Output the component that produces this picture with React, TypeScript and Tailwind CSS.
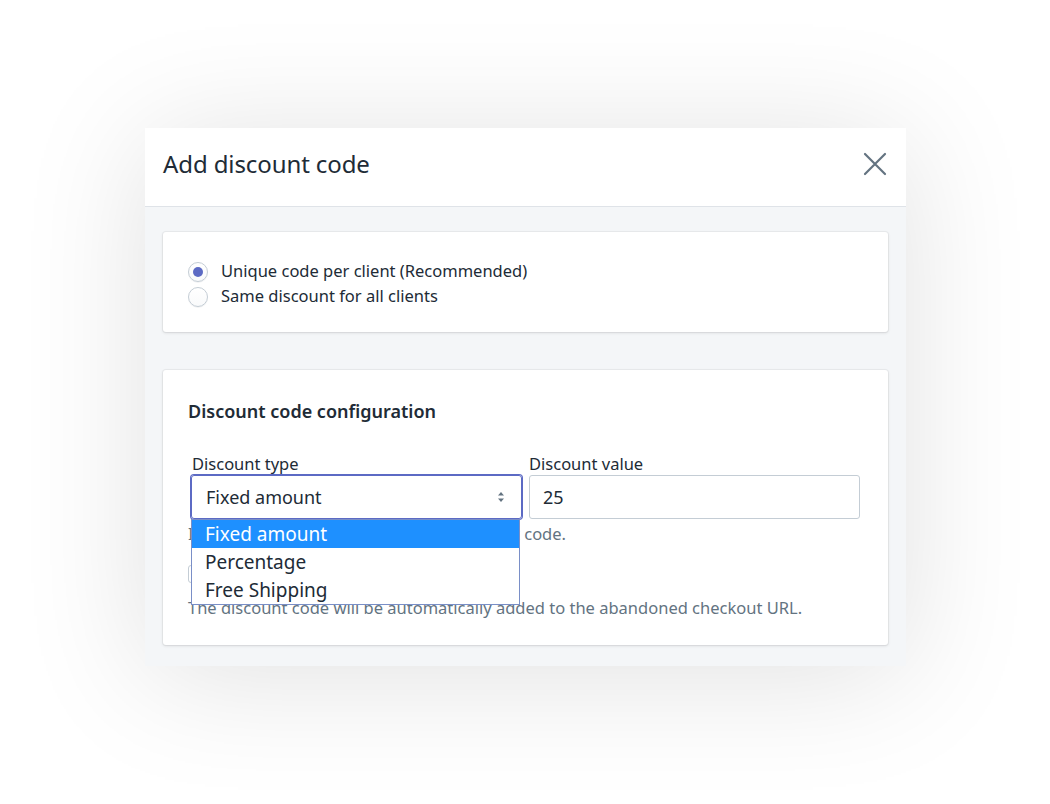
import React from 'react';

const font = { fontFamily: '"Noto Sans", "Open Sans", sans-serif' };

/* Radio button drawn like Polaris */
const Radio = ({ checked, label }: { checked?: boolean; label: string }) => (
    <label className="flex items-center gap-[13px] h-[25px]">
        <span className="w-[20px] h-[20px] rounded-full border border-[#c4cdd5] bg-gradient-to-b from-white to-[#f9fafb] flex items-center justify-center shadow-[0_1px_0_rgba(22,29,37,0.05)]">
            {checked && <span className="w-[10px] h-[10px] rounded-full bg-[#5c6ac4]" />}
        </span>
        <span className="text-[16.5px] text-[#212b36]">{label}</span>
    </label>
);

export default function App() {
    return (
        <div className="min-h-[804px] w-full bg-white" style={font}>
            <div className="pt-[128px] pl-[145px]">
                <div className="w-[761px] bg-[#f4f6f8] shadow-[0_10px_120px_rgba(0,0,0,0.12)]">
                    {/* header */}
                    <div className="h-[79px] bg-white border-b border-[#dfe3e8] flex items-center justify-between pl-[18px] pr-[19px] pb-[6px]">
                        <h2 className="text-[24px] text-[#212b36] font-normal tracking-[-0.1px]">Add discount code</h2>
                        <svg width="24" height="24" viewBox="0 0 24 24" fill="none" stroke="#637381" strokeWidth="2.2" strokeLinecap="round">
                            <path d="M2 2L22 22M22 2L2 22" />
                        </svg>
                    </div>

                    <div className="px-[18px] pt-[25px] pb-[21px] flex flex-col gap-[38px]">
                        {/* discount mode */}
                        <div className="bg-white rounded-[3px] shadow-[0_0_0_1px_rgba(63,63,68,0.05),0_1px_3px_rgba(63,63,68,0.15)] pl-[25px] pt-[27px] pb-[23px] flex flex-col">
                            <Radio checked label="Unique code per client (Recommended)" />
                            <Radio label="Same discount for all clients" />
                        </div>

                        {/* configuration */}
                        <div className="bg-white rounded-[3px] shadow-[0_0_0_1px_rgba(63,63,68,0.05),0_1px_3px_rgba(63,63,68,0.15)] pl-[25px] pr-[28px] pt-[28px] pb-[26px]">
                            <h3 className="text-[18px] font-semibold text-[#212b36] leading-[26px]">Discount code configuration</h3>

                            <div className="mt-[29px] pl-[3px] grid grid-cols-2 gap-x-[7px]">
                                <div className="relative">
                                    <div className="text-[16.5px] text-[#212b36] leading-[22px] pl-[1px]">Discount type</div>
                                    <div className="h-[44px] border border-[#5c6ac4] rounded-[3px] shadow-[0_0_0_1px_#5c6ac4] flex items-center justify-between pl-[14px] pr-[16px]">
                                        <span className="text-[18px] text-[#212b36]">Fixed amount</span>
                                        <svg width="8" height="14" viewBox="0 0 8 14" fill="#637381">
                                            <path d="M4 2L7 5.5H1Z" />
                                            <path d="M4 12L7 8.5H1Z" />
                                        </svg>
                                    </div>
                                    {/* open option list */}
                                    <div className="absolute left-0 top-[66px] w-[329px] bg-white border border-[#7a8fc7] z-10 text-[19px] leading-[28px] text-[#212b36]">
                                        <div className="bg-[#1e90ff] text-white pl-[13px]">Fixed amount</div>
                                        <div className="pl-[13px]">Percentage</div>
                                        <div className="pl-[13px]">Free Shipping</div>
                                    </div>
                                </div>
                                <div>
                                    <div className="text-[16.5px] text-[#212b36] leading-[22px]">Discount value</div>
                                    <div className="h-[44px] border border-[#c4cdd5] rounded-[3px] flex items-center pl-[13px]">
                                        <span className="text-[18px] text-[#212b36]">25</span>
                                    </div>
                                </div>
                            </div>

                            <p className="mt-[4px] text-[16.5px] leading-[22px] text-[#637381]">Indicate the value applied to each discount code.</p>

                            <div className="mt-[17px] h-[24px] flex items-center">
                                <span className="w-[18px] h-[18px] border border-[#c4cdd5] rounded-[3px]" />
                            </div>

                            <p className="mt-[11px] text-[16.5px] leading-[22px] text-[#637381]">The discount code will be automatically added to the abandoned checkout URL.</p>
                        </div>
                    </div>
                </div>
            </div>
        </div>
    );
}
